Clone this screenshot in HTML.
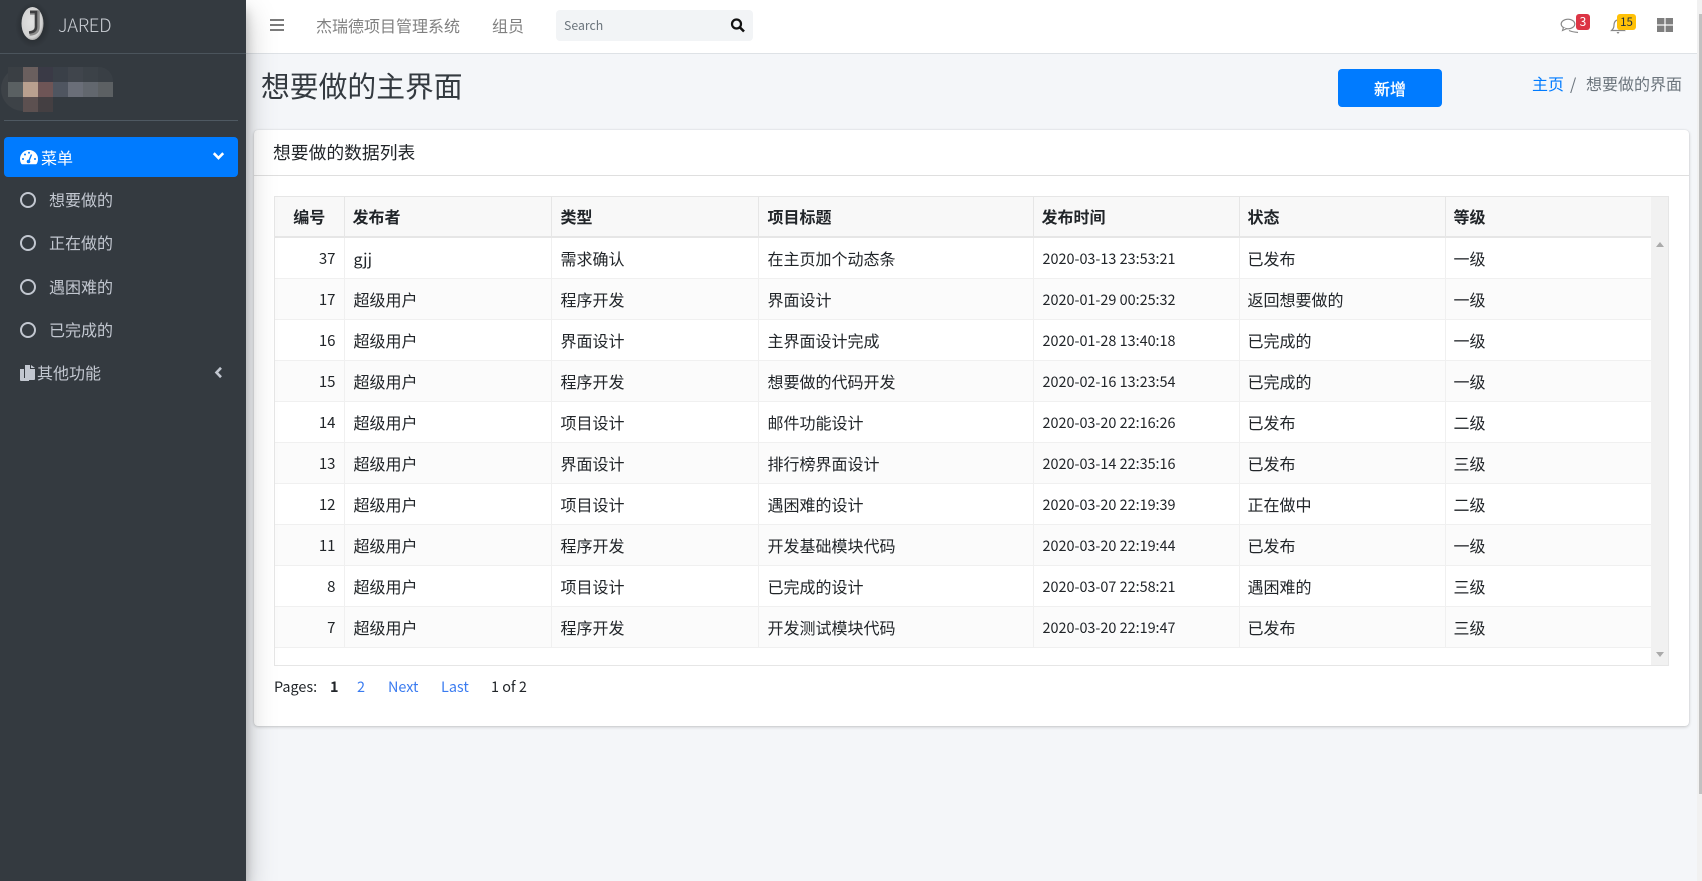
<!DOCTYPE html>
<html lang="zh">
<head>
<meta charset="utf-8">
<title>想要做的主界面</title>
<style>
*{box-sizing:border-box}
html,body{margin:0;padding:0;width:1702px;height:881px;overflow:hidden}
body{background:#f4f6f9;font-family:"Noto Sans CJK SC","Liberation Sans",sans-serif;font-size:16px;color:#212529;position:relative}
.abs{position:absolute;white-space:nowrap}
#nav{position:absolute;left:246px;top:0;width:1451px;height:54px;background:#fff;border-bottom:1px solid #dee2e6}
#side{position:absolute;left:0;top:0;width:246px;height:881px;background:#343a40;box-shadow:0 14px 28px rgba(0,0,0,.25),0 10px 10px rgba(0,0,0,.22);z-index:5;color:#c2c7d0}
.mi{position:absolute;left:49px;line-height:24px;height:24px;font-size:16px;color:#c2c7d0;white-space:nowrap}
.ci{position:absolute;left:20px;width:16px;height:16px;border:2px solid #c2c7d0;border-radius:50%}
.px{position:absolute;width:15px;height:15px}
#card{position:absolute;left:254px;top:130px;width:1435px;height:596px;background:#fff;border-radius:4px;box-shadow:0 0 1px rgba(0,0,0,.125),0 1px 3px rgba(0,0,0,.2)}
#grid{position:absolute;left:274px;top:196px;width:1395px;height:470px;border:1px solid #e6e6e6;background:#fff;overflow:hidden}
#sb{position:absolute;right:0;top:0;width:17px;height:468px;background:#f1f1f1}
table{border-collapse:collapse;table-layout:fixed;width:1376px;position:absolute;left:0;top:0}
th,td{padding:0 8px;border-right:1px solid #f0f0f0;border-bottom:1px solid #f0f0f0;height:41px;font-weight:400;text-align:left;white-space:nowrap;overflow:hidden;color:#212529;font-size:16px}
td:nth-child(2),td:nth-child(3),td:nth-child(4),td:nth-child(5){padding-left:9px}
th{background:#f8f8f8;font-weight:700;border-right:1.5px solid #e6e6e6;border-bottom:2px solid #e6e6e6;height:40px;font-size:16px;padding:0 8px 2px}
th:nth-child(3),th:nth-child(4){padding-left:9px}
tr:nth-child(odd) td{background:#fbfbfb}
td.n{text-align:right;font-size:15px;padding-top:2px}
td.d{font-size:14.4px;padding-top:2px}
th:last-child,td:last-child{border-right:0}
.pg{position:absolute;top:675px;line-height:24px;font-size:14.4px;white-space:nowrap;color:#212529}
.pg.l{color:#3a7bf0}
</style>
</head>
<body>

<div id="side">
  <svg class="abs" style="left:10px;top:0" width="48" height="50" viewBox="10 0 48 50">
    <defs>
      <radialGradient id="lg" cx="45%" cy="45%" r="60%"><stop offset="0" stop-color="#e2e2e2"/><stop offset=".8" stop-color="#d2d2d2"/><stop offset="1" stop-color="#8f8f8f"/></radialGradient>
      <radialGradient id="sh" cx="50%" cy="50%" r="50%"><stop offset=".6" stop-color="#22262a" stop-opacity=".55"/><stop offset="1" stop-color="#22262a" stop-opacity="0"/></radialGradient>
    </defs>
    <ellipse cx="33" cy="25" rx="18" ry="23" fill="url(#sh)"/>
    <ellipse cx="32.5" cy="23.5" rx="11" ry="16.5" fill="url(#lg)"/>
    <path d="M30 12.5H37.5V27Q37.5 33 29.5 33.5" fill="none" stroke="#8a8a8a" stroke-width="4.5"/>
    <path d="M30 12H36V27Q36 32 29 32.5" fill="none" stroke="#3e3e40" stroke-width="2.6"/>
  </svg>
  <div class="abs" style="left:58px;top:10px;font-size:18.500px;letter-spacing:-.3px;line-height:30px;font-weight:300;color:#c8ccd2">JARED</div>
  <div class="abs" style="left:0;top:53px;width:246px;height:1px;background:#4b545c"></div>

  <div class="abs" style="left:1px;top:67px;width:50px;height:44px;border-radius:22px;background:#3d4247"></div>
  <div class="abs" style="left:68px;top:67px;width:45px;height:15px;border-radius:0 14px 0 0;background:#393f45"></div>
  <div class="px" style="left:8px;top:67px;background:#3a3f44"></div>
  <div class="px" style="left:23px;top:67px;background:#6a5f5e"></div>
  <div class="px" style="left:38px;top:67px;background:#3a3a46"></div>
  <div class="px" style="left:53px;top:67px;background:#3a4048"></div>
  <div class="px" style="left:68px;top:67px;background:#40454c"></div>
  <div class="px" style="left:83px;top:67px;background:#3c4248"></div>
  <div class="px" style="left:8px;top:82px;background:#5a6062"></div>
  <div class="px" style="left:23px;top:82px;background:#b9a08f"></div>
  <div class="px" style="left:38px;top:82px;background:#6e5556"></div>
  <div class="px" style="left:53px;top:82px;background:#4f5560"></div>
  <div class="px" style="left:68px;top:82px;background:#6a6e78"></div>
  <div class="px" style="left:83px;top:82px;background:#62676e"></div>
  <div class="px" style="left:98px;top:82px;background:#5c6063"></div>
  <div class="px" style="left:23px;top:97px;background:#5c5050"></div>
  <div class="px" style="left:38px;top:97px;background:#443f42"></div>

  <div class="abs" style="left:4px;top:120px;width:234px;height:1px;background:#4f5962"></div>

  <div class="abs" style="left:4px;top:137px;width:234px;height:40px;background:#007bff;border-radius:4px"></div>
  <svg class="abs" style="left:20px;top:149px" width="18" height="16" viewBox="0 0 18 16">
    <path fill="#fff" d="M9 1C4 1 0 5 0 10c0 1.800.5 3.400 1.300 4.800.2.300.5.500.9.500h13.600c.4 0 .7-.2.900-.5C17.500 13.400 18 11.800 18 10c0-5-4-9-9-9z"/>
    <circle cx="3" cy="10" r="1" fill="#007bff"/><circle cx="5" cy="5.500" r="1" fill="#007bff"/><circle cx="9" cy="3.800" r="1" fill="#007bff"/><circle cx="15" cy="10" r="1" fill="#007bff"/>
    <path d="M8.300 13.500 11.500 5.500" stroke="#007bff" stroke-width="1.400"/><circle cx="8.500" cy="12.500" r="1.800" fill="#007bff"/>
  </svg>
  <div class="abs" style="left:41px;top:145px;line-height:24px;color:#fff;font-size:16px">菜单</div>
  <svg class="abs" style="left:212px;top:151px" width="13" height="10" viewBox="0 0 13 10"><path d="M1.800 2.200 6.500 7 11.200 2.200" fill="none" stroke="#fff" stroke-width="2.600"/></svg>

  <div class="ci" style="top:192px"></div><div class="mi" style="top:187px">想要做的</div>
  <div class="ci" style="top:235px"></div><div class="mi" style="top:230px">正在做的</div>
  <div class="ci" style="top:279px"></div><div class="mi" style="top:274px">遇困难的</div>
  <div class="ci" style="top:322px"></div><div class="mi" style="top:317px">已完成的</div>

  <svg class="abs" style="left:20px;top:365px" width="15" height="16" viewBox="0 0 15 16">
    <path fill="#c2c7d0" d="M0 4h4v9h5v3H1a1 1 0 0 1-1-1z"/>
    <path fill="#c2c7d0" d="M5 0h5v4h5v10a1 1 0 0 1-1 1H6a1 1 0 0 1-1-1z"/>
    <path fill="#c2c7d0" d="M11 0l4 3h-4z"/>
  </svg>
  <div class="mi" style="left:37px;top:360px">其他功能</div>
  <svg class="abs" style="left:214px;top:366px" width="9" height="13" viewBox="0 0 9 13"><path d="M7 1.800 2.500 6.500 7 11.200" fill="none" stroke="#c2c7d0" stroke-width="2.600"/></svg>
</div>

<div id="nav"></div>
<div class="abs" style="left:270px;top:19px;width:14px;height:2px;background:#7b7b7b"></div>
<div class="abs" style="left:270px;top:24px;width:14px;height:2px;background:#7b7b7b"></div>
<div class="abs" style="left:270px;top:29px;width:14px;height:2px;background:#7b7b7b"></div>
<div class="abs" style="left:316px;top:13px;line-height:24px;font-size:16px;color:#808080">杰瑞德项目管理系统</div>
<div class="abs" style="left:492px;top:13px;line-height:24px;font-size:16px;color:#808080">组员</div>
<div class="abs" style="left:556px;top:10px;width:197px;height:31px;background:#f2f4f6;border-radius:4px"></div>
<div class="abs" style="left:564px;top:14px;line-height:22px;font-size:12.3px;color:#6c757d">Search</div>
<svg class="abs" style="left:730px;top:18px" width="16" height="15" viewBox="0 0 16 15">
  <circle cx="6.500" cy="6" r="4.500" fill="none" stroke="#111" stroke-width="2.200"/>
  <path d="M10 9.500 14 13.500" stroke="#111" stroke-width="2.600"/>
</svg>

<svg class="abs" style="left:1560px;top:16px" width="20" height="18" viewBox="0 0 20 18">
  <ellipse cx="8" cy="8" rx="6.800" ry="4.800" fill="none" stroke="#888" stroke-width="1.200"/>
  <path d="M3.500 11.500 2.500 14.500 6.500 12.800" fill="#fff" stroke="#888" stroke-width="1.100"/>
  <path d="M9 14.500C12 16 15 16 18 16.500" fill="none" stroke="#888" stroke-width="1.200"/>
</svg>
<div class="abs" style="left:1576px;top:14px;width:14px;height:16px;background:#dc3545;border-radius:3px;color:#fff;font-size:12px;line-height:16px;text-align:center">3</div>
<svg class="abs" style="left:1610px;top:17px" width="17" height="18" viewBox="0 0 17 18">
  <path d="M8 3C5 3 4 6 4 8c0 3-1 4-2.500 5.500h13C13 12 12 11 12 8c0-2-1-5-4-5z" fill="none" stroke="#888" stroke-width="1.200"/>
  <path d="M6.500 15h3L8 17z" fill="#888"/>
</svg>
<div class="abs" style="left:1617px;top:14px;width:19px;height:16px;background:#ffc107;border-radius:3px;color:#1f2d3d;font-size:11.500px;line-height:16px;text-align:center">15</div>
<svg class="abs" style="left:1657px;top:18px" width="16" height="14" viewBox="0 0 16 14">
  <rect x="0" y="0" width="7.400" height="6.400" fill="#7f7f7f"/><rect x="8.600" y="0" width="7.400" height="6.400" fill="#7f7f7f"/>
  <rect x="0" y="7.600" width="7.400" height="6.400" fill="#7f7f7f"/><rect x="8.600" y="7.600" width="7.400" height="6.400" fill="#7f7f7f"/>
</svg>

<div class="abs" style="left:261px;top:66px;font-size:28.800px;line-height:40px;color:#343a40">想要做的主界面</div>
<div class="abs" style="left:1338px;top:69px;width:104px;height:38px;background:#007bff;border-radius:4px;color:#fff;font-size:16px;line-height:38px;text-align:center;-webkit-text-stroke:.3px #fff">新增</div>
<div class="abs" style="left:1532px;top:71px;line-height:24px;font-size:16px;color:#007bff">主页</div>
<div class="abs" style="left:1570px;top:71px;line-height:24px;font-size:16px;color:#6c757d">/</div>
<div class="abs" style="left:1586px;top:71px;line-height:24px;font-size:16px;color:#6c757d">想要做的界面</div>

<div id="card">
  <div class="abs" style="left:19px;top:9px;font-size:17.800px;line-height:26px;color:#212529">想要做的数据列表</div>
  <div class="abs" style="left:0;top:45px;width:1435px;height:1px;background:#dfdfdf"></div>
</div>

<div id="grid">
  <div id="sb"></div>
  <svg class="abs" style="left:1379px;top:45px" width="12" height="6" viewBox="0 0 12 6"><path d="M6 0 10 5H2z" fill="#aaa"/></svg>
  <svg class="abs" style="left:1379px;top:455px" width="12" height="6" viewBox="0 0 12 6"><path d="M2 0H10L6 5z" fill="#aaa"/></svg>
  <table>
    <colgroup><col style="width:69px"><col style="width:207px"><col style="width:207px"><col style="width:275px"><col style="width:206px"><col style="width:206px"><col style="width:206px"></colgroup>
    <tr><th style="text-align:center">编号</th><th>发布者</th><th>类型</th><th>项目标题</th><th>发布时间</th><th>状态</th><th>等级</th></tr>
    <tr><td class="n">37</td><td>gjj</td><td>需求确认</td><td>在主页加个动态条</td><td class="d">2020-03-13 23:53:21</td><td>已发布</td><td>一级</td></tr>
    <tr><td class="n">17</td><td>超级用户</td><td>程序开发</td><td>界面设计</td><td class="d">2020-01-29 00:25:32</td><td>返回想要做的</td><td>一级</td></tr>
    <tr><td class="n">16</td><td>超级用户</td><td>界面设计</td><td>主界面设计完成</td><td class="d">2020-01-28 13:40:18</td><td>已完成的</td><td>一级</td></tr>
    <tr><td class="n">15</td><td>超级用户</td><td>程序开发</td><td>想要做的代码开发</td><td class="d">2020-02-16 13:23:54</td><td>已完成的</td><td>一级</td></tr>
    <tr><td class="n">14</td><td>超级用户</td><td>项目设计</td><td>邮件功能设计</td><td class="d">2020-03-20 22:16:26</td><td>已发布</td><td>二级</td></tr>
    <tr><td class="n">13</td><td>超级用户</td><td>界面设计</td><td>排行榜界面设计</td><td class="d">2020-03-14 22:35:16</td><td>已发布</td><td>三级</td></tr>
    <tr><td class="n">12</td><td>超级用户</td><td>项目设计</td><td>遇困难的设计</td><td class="d">2020-03-20 22:19:39</td><td>正在做中</td><td>二级</td></tr>
    <tr><td class="n">11</td><td>超级用户</td><td>程序开发</td><td>开发基础模块代码</td><td class="d">2020-03-20 22:19:44</td><td>已发布</td><td>一级</td></tr>
    <tr><td class="n">8</td><td>超级用户</td><td>项目设计</td><td>已完成的设计</td><td class="d">2020-03-07 22:58:21</td><td>遇困难的</td><td>三级</td></tr>
    <tr><td class="n">7</td><td>超级用户</td><td>程序开发</td><td>开发测试模块代码</td><td class="d">2020-03-20 22:19:47</td><td>已发布</td><td>三级</td></tr>
  </table>
</div>

<div class="pg" style="left:274px">Pages:</div>
<div class="pg" style="left:330px;font-weight:700">1</div>
<div class="pg l" style="left:357px">2</div>
<div class="pg l" style="left:388px">Next</div>
<div class="pg l" style="left:441px">Last</div>
<div class="pg" style="left:491px">1 of 2</div>

<div class="abs" style="left:1697px;top:0;width:5px;height:881px;background:#f1f1f1"></div>
<div class="abs" style="left:1699px;top:14px;width:3px;height:780px;background:#c1c1c1"></div>

</body>
</html>
